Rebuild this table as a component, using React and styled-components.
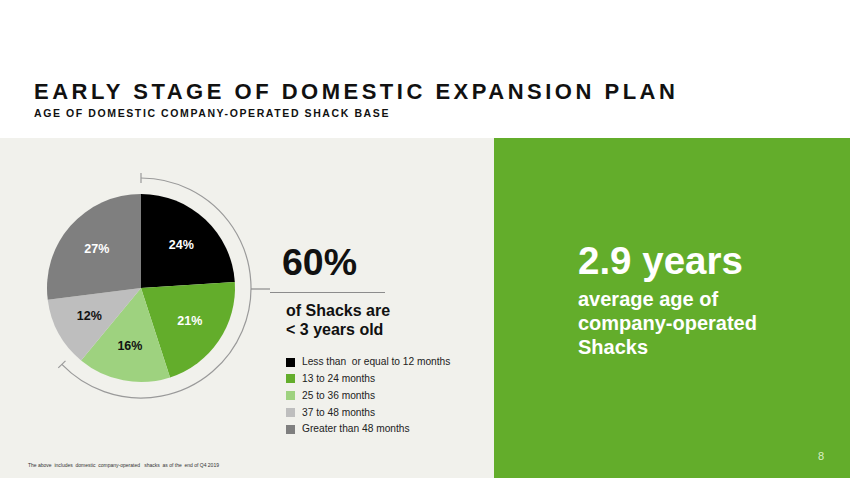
import React from 'react';
import styled, { createGlobalStyle } from 'styled-components';

const GlobalStyle = createGlobalStyle`
  html, body {
    margin: 0;
    padding: 0;
    background: #ffffff;
  }
  body {
    font-family: "Liberation Sans", Arial, sans-serif;
  }
`;

const slices = [
  { value: 24, color: '#000000', text: '#ffffff' },
  { value: 21, color: '#63ad2b', text: '#ffffff' },
  { value: 16, color: '#9ed27f', text: '#111111' },
  { value: 12, color: '#bebebe', text: '#111111' },
  { value: 27, color: '#7f7f7f', text: '#ffffff' },
];

const legend = [
  { color: '#000000', label: 'Less than  or equal to 12 months' },
  { color: '#63ad2b', label: '13 to 24 months' },
  { color: '#9ed27f', label: '25 to 36 months' },
  { color: '#bebebe', label: '37 to 48 months' },
  { color: '#7f7f7f', label: 'Greater than 48 months' },
];

const Slide = styled.div`
  width: 850px;
  height: 478px;
  display: flex;
  flex-direction: column;
  overflow: hidden;
`;

const Header = styled.header`
  height: 138px;
  box-sizing: border-box;
  padding: 80px 0 0 34px;
  background: #ffffff;
`;

const Title = styled.h1`
  margin: 0;
  font-size: 22px;
  line-height: 24px;
  font-weight: 700;
  letter-spacing: 3.5px;
  color: #111111;
`;

const Subtitle = styled.h2`
  margin: 3px 0 0;
  font-size: 10.5px;
  line-height: 12px;
  font-weight: 700;
  letter-spacing: 1.6px;
  color: #111111;
`;

const Body = styled.main`
  flex: 1;
  display: flex;
`;

const ChartPanel = styled.section`
  width: 494px;
  position: relative;
  background: #f1f1ec;
  display: flex;
  padding: 32px 0 0 30px;
  box-sizing: border-box;
`;

const ChartSvg = styled.svg`
  display: block;
  flex: none;
`;

const Stats = styled.div`
  display: flex;
  flex-direction: column;
  padding-top: 72px;
`;

const BigNumber = styled.div`
  padding-left: 12px;
  font-size: 37.5px;
  line-height: 40px;
  font-weight: 700;
  color: #111111;
`;

const Rule = styled.div`
  width: 115px;
  height: 1.2px;
  margin-top: 10px;
  background: #8c8c8c;
`;

const Caption = styled.div`
  margin-top: 8px;
  padding-left: 16px;
  font-size: 16px;
  line-height: 19px;
  font-weight: 700;
  color: #111111;
`;

const Legend = styled.ul`
  list-style: none;
  margin: 17px 0 0;
  padding: 0 0 0 16px;
  display: flex;
  flex-direction: column;
  gap: 4.8px;
`;

const LegendItem = styled.li`
  display: flex;
  align-items: center;
  gap: 7px;
  font-size: 10.2px;
  line-height: 12px;
  color: #222222;
  white-space: pre;
`;

const Swatch = styled.span`
  width: 9px;
  height: 9px;
  flex: none;
  background: ${(p) => p.$color};
`;

const Footnote = styled.p`
  position: absolute;
  left: 28px;
  bottom: 10px;
  margin: 0;
  font-size: 5px;
  color: #333333;
  white-space: pre;
`;

const StatPanel = styled.section`
  flex: 1;
  position: relative;
  background: #63ad2b;
  padding: 101px 0 0 84px;
  box-sizing: border-box;
  color: #ffffff;
`;

const Years = styled.div`
  font-size: 38.5px;
  line-height: 44px;
  font-weight: 700;
`;

const YearsCaption = styled.div`
  margin-top: 4px;
  font-size: 20px;
  line-height: 24px;
  font-weight: 700;
`;

const PageNumber = styled.span`
  position: absolute;
  right: 26px;
  bottom: 16px;
  font-size: 11px;
  color: #dcefc6;
`;

const CX = 111;
const CY = 118;
const R = 94;
const ARC_R = 110;

const point = (angle, r) => {
  const rad = (angle * Math.PI) / 180;
  return [CX + r * Math.sin(rad), CY - r * Math.cos(rad)];
};

const PieChart = () => {
  let start = 0;
  const total = slices.reduce((s, d) => s + d.value, 0);
  const parts = slices.map((d) => {
    const sweep = (d.value / total) * 360;
    const end = start + sweep;
    const [x1, y1] = point(start, R);
    const [x2, y2] = point(end, R);
    const large = sweep > 180 ? 1 : 0;
    const [lx, ly] = point(start + sweep / 2, 59);
    start = end;
    return {
      ...d,
      path: `M${CX},${CY} L${x1},${y1} A${R},${R} 0 ${large} 1 ${x2},${y2} Z`,
      lx,
      ly,
    };
  });

  const arcEnd = 226;
  const [ax1, ay1] = point(0, ARC_R);
  const [ax2, ay2] = point(arcEnd, ARC_R);
  const [t1x, t1y] = point(arcEnd, ARC_R - 5);
  const [t2x, t2y] = point(arcEnd, ARC_R + 5);

  return (
    <ChartSvg width="240" height="230" viewBox="0 0 240 230">
      {parts.map((p) => (
        <path key={p.value} d={p.path} fill={p.color} />
      ))}
      {parts.map((p) => (
        <text
          key={`t${p.value}`}
          x={p.lx}
          y={p.ly}
          fill={p.text}
          fontSize="12.5"
          fontWeight="700"
          textAnchor="middle"
          dominantBaseline="central"
          fontFamily="Liberation Sans, Arial, sans-serif"
        >
          {p.value}%
        </text>
      ))}
      <path
        d={`M${ax1},${ay1} A${ARC_R},${ARC_R} 0 1 1 ${ax2},${ay2}`}
        fill="none"
        stroke="#9a9a9a"
        strokeWidth="1.2"
      />
      <line x1={CX} y1={ay1 - 5} x2={CX} y2={ay1 + 5} stroke="#9a9a9a" strokeWidth="1.2" />
      <line x1={t1x} y1={t1y} x2={t2x} y2={t2y} stroke="#9a9a9a" strokeWidth="1.2" />
      <line x1={CX + ARC_R} y1={CY + 1} x2="240" y2={CY + 1} stroke="#8c8c8c" strokeWidth="1.2" />
    </ChartSvg>
  );
};

const App = () => {
  return (
    <Slide>
      <GlobalStyle />
      <Header>
        <Title>EARLY STAGE OF DOMESTIC EXPANSION PLAN</Title>
        <Subtitle>AGE OF DOMESTIC COMPANY-OPERATED SHACK BASE</Subtitle>
      </Header>
      <Body>
        <ChartPanel>
          <PieChart />
          <Stats>
            <BigNumber>60%</BigNumber>
            <Rule />
            <Caption>
              of Shacks are
              <br />
              &lt; 3 years old
            </Caption>
            <Legend>
              {legend.map((item) => (
                <LegendItem key={item.label}>
                  <Swatch $color={item.color} />
                  {item.label}
                </LegendItem>
              ))}
            </Legend>
          </Stats>
          <Footnote>
            The above  includes  domestic  company-operated   shacks  as of the  end of Q4 2019
          </Footnote>
        </ChartPanel>
        <StatPanel>
          <Years>2.9 years</Years>
          <YearsCaption>
            average age of
            <br />
            company-operated
            <br />
            Shacks
          </YearsCaption>
          <PageNumber>8</PageNumber>
        </StatPanel>
      </Body>
    </Slide>
  );
};

export default App;
